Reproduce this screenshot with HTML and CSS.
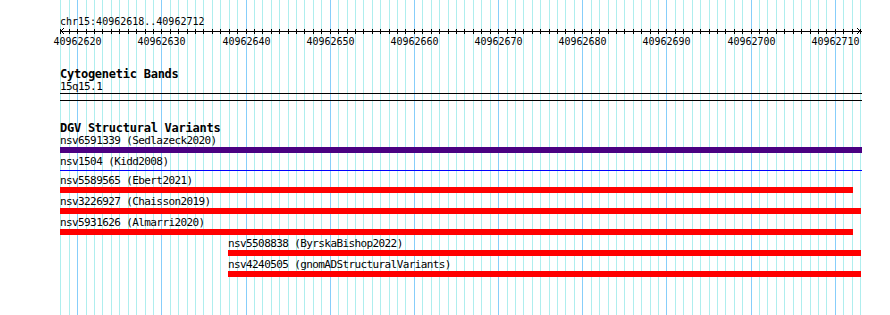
FILE: index.html
```html
<!DOCTYPE html>
<html lang="en">
<head>
    <meta charset="UTF-8">
    <title>chr15:40962618..40962712</title>
    <link rel="stylesheet" href="styles.css">
</head>
<body>
    <div class="view">
        <svg class="grid" id="grid" width="890" height="315"></svg>

        <div class="ruler">
            <svg id="ruler" width="890" height="68">
                <text class="ruler-title" x="60" y="25">chr15:40962618..40962712</text>
                <rect x="60" y="31" width="802" height="1" fill="#000"></rect>
                <polyline points="64,28 61,31 64,34" fill="none" stroke="#000"></polyline>
                <polyline points="857,28 860,31 857,34" fill="none" stroke="#000"></polyline>
            </svg>
        </div>

        <section class="track cyto">
            <h3 class="track-title">Cytogenetic Bands</h3>
            <div class="label">15q15.1</div>
            <div class="band"></div>
        </section>

        <section class="track dgv">
            <h3 class="track-title">DGV Structural Variants</h3>
            <div class="feature" style="margin-left:60px">
                <div class="label">nsv6591339 (Sedlazeck2020)</div>
                <div class="bar purple" style="width:802px"></div>
            </div>
            <div class="feature" style="margin-left:60px">
                <div class="label">nsv1504 (Kidd2008)</div>
                <div class="bar thin" style="width:802px"></div>
            </div>
            <div class="feature" style="margin-left:60px">
                <div class="label">nsv5589565 (Ebert2021)</div>
                <div class="bar red" style="width:793px"></div>
            </div>
            <div class="feature" style="margin-left:60px">
                <div class="label">nsv3226927 (Chaisson2019)</div>
                <div class="bar red" style="width:801px"></div>
            </div>
            <div class="feature" style="margin-left:60px">
                <div class="label">nsv5931626 (Almarri2020)</div>
                <div class="bar red" style="width:793px"></div>
            </div>
            <div class="feature" style="margin-left:228px">
                <div class="label">nsv5508838 (ByrskaBishop2022)</div>
                <div class="bar red" style="width:633px"></div>
            </div>
            <div class="feature" style="margin-left:228px">
                <div class="label">nsv4240505 (gnomADStructuralVariants)</div>
                <div class="bar red" style="width:633px"></div>
            </div>
        </section>
    </div>
    <script>
const svgNS = 'http://www.w3.org/2000/svg';
const start = 40962618;
const origin = 60.86;
const bpWidth = 8.418;
const grid = document.getElementById('grid');
const ruler = document.getElementById('ruler');

function rect(parent, x, y, w, h, fill) {
    const r = document.createElementNS(svgNS, 'rect');
    r.setAttribute('x', x);
    r.setAttribute('y', y);
    r.setAttribute('width', w);
    r.setAttribute('height', h);
    r.setAttribute('fill', fill);
    parent.appendChild(r);
}

for (let i = 0; i <= 95; i++) {
    const x = Math.floor(origin + i * bpWidth);
    const major = (start + i) % 10 === 0;

    // grid line, darker every 10bp
    rect(grid, x, 0, 1, 315, major ? '#87cefa' : '#afeeee');
    rect(ruler, x, 29, 1, 5, '#000');

    if (major) {
        const t = document.createElementNS(svgNS, 'text');
        t.setAttribute('x', x + 0.5);
        t.setAttribute('y', 45);
        t.setAttribute('class', 'tick-label');
        t.textContent = start + i;
        ruler.appendChild(t);
    }
}
    </script>
</body>
</html>
```

FILE: styles.css
```css
body {
    margin: 0;
    background: #fff;
}

.view {
    position: relative;
    z-index: 0;
    width: 890px;
    height: 315px;
    overflow: hidden;
    font-family: "DejaVu Sans Mono", monospace;
    color: #000;
}

.grid {
    position: absolute;
    left: 0;
    top: 0;
    z-index: -1;
}

.ruler svg {
    display: block;
}

.ruler-title {
    font-family: "DejaVu Sans Mono", monospace;
    font-size: 10px;
}

.tick-label {
    font-family: "DejaVu Sans Mono", monospace;
    font-size: 10px;
    text-anchor: middle;
}

.track-title {
    margin: 0;
    padding-left: 60px;
    font-size: 12px;
    line-height: 12px;
    font-weight: bold;
    letter-spacing: -0.25px;
}

.label {
    font-size: 11px;
    line-height: 13px;
    letter-spacing: -0.6px;
    white-space: nowrap;
}

.cyto .label {
    padding-left: 60px;
}

.band {
    margin-left: 60px;
    width: 802px;
    height: 6px;
    border-top: 1px solid #000;
    border-bottom: 1px solid #000;
}

.dgv {
    margin-top: 21px;
}

.feature {
    margin-bottom: 2px;
}

.bar {
    height: 6px;
}

.bar.purple {
    background: #4b0082;
}

.bar.red {
    background: #ff0000;
}

.bar.thin {
    height: 1px;
    margin: 2px 0 3px;
    background: #0000ff;
}
```
